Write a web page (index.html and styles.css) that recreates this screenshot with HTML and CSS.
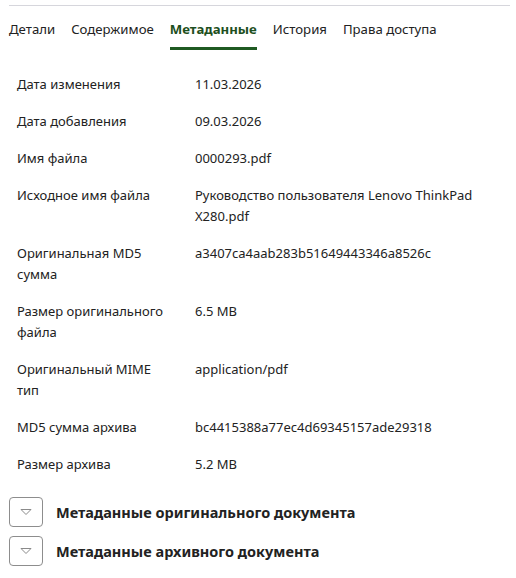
FILE: index.html
```html
<!DOCTYPE html>
<html lang="ru">
<head>
<meta charset="utf-8">
<link rel="stylesheet" href="styles.css">
</head>
<body>
<div class="panel">
  <nav class="tabs">
    <span class="tab">Детали</span>
    <span class="tab">Содержимое</span>
    <span class="tab active">Метаданные</span>
    <span class="tab">История</span>
    <span class="tab">Права доступа</span>
  </nav>
  <table class="meta">
    <tr><td class="k">Дата изменения</td><td class="v">11.03.2026</td></tr>
    <tr><td class="k">Дата добавления</td><td class="v">09.03.2026</td></tr>
    <tr><td class="k">Имя файла</td><td class="v">0000293.pdf</td></tr>
    <tr><td class="k">Исходное имя файла</td><td class="v">Руководство пользователя Lenovo ThinkPad X280.pdf</td></tr>
    <tr><td class="k">Оригинальная MD5 сумма</td><td class="v">a3407ca4aab283b51649443346a8526c</td></tr>
    <tr><td class="k">Размер оригинального файла</td><td class="v">6.5 MB</td></tr>
    <tr><td class="k">Оригинальный MIME тип</td><td class="v">application/pdf</td></tr>
    <tr><td class="k">MD5 сумма архива</td><td class="v">bc4415388a77ec4d69345157ade29318</td></tr>
    <tr><td class="k">Размер архива</td><td class="v">5.2 MB</td></tr>
  </table>
  <div class="sections">
    <div class="section">
      <button class="toggle"><svg width="12" height="8" viewBox="0 0 12 8"><path d="M1 1.5 H11 L6 6.5 Z" fill="none" stroke="#8a8a8a" stroke-width="1" stroke-linejoin="round"/></svg></button>
      <h3>Метаданные оригинального документа</h3>
    </div>
    <div class="section">
      <button class="toggle"><svg width="12" height="8" viewBox="0 0 12 8"><path d="M1 1.5 H11 L6 6.5 Z" fill="none" stroke="#8a8a8a" stroke-width="1" stroke-linejoin="round"/></svg></button>
      <h3>Метаданные архивного документа</h3>
    </div>
  </div>
</div>
</body>
</html>
```
FILE: styles.css
```css
html, body {
  margin: 0;
  padding: 0;
  background: #fff;
}
body {
  font-family: "Noto Sans", "Open Sans", sans-serif;
  font-size: 13px;
  color: #222;
}
.panel {
  margin: 5px 6px 0 9px;
  border-top: 1px solid #d6d6dc;
}
.tabs {
  display: flex;
  gap: 16px;
  align-items: flex-start;
  padding-top: 13px;
  line-height: 20px;
  font-size: 13.2px;
}
.tab {
  color: #222;
  border-bottom: 3px solid transparent;
  padding-bottom: 8px;
}
.tab.active {
  font-weight: 700;
  color: #1d4f20;
  border-bottom-color: #1f5a22;
}
.meta {
  border-collapse: collapse;
  margin-top: 16px;
}
.meta td {
  padding: 8px 0 8px 8px;
  line-height: 21px;
  vertical-align: top;
}
.meta .k {
  width: 178px;
  padding-right: 18px;
  box-sizing: border-box;
}
.meta .v {
  width: 300px;
  padding-left: 8px;
}
.sections {
  margin-top: 14px;
  display: flex;
  flex-direction: column;
  gap: 9px;
}
.section {
  display: flex;
  align-items: center;
  gap: 13px;
}
.toggle {
  width: 34px;
  height: 30px;
  border: 1px solid #8d8d8d;
  border-radius: 4px;
  background: #fff;
  padding: 0;
  display: flex;
  align-items: center;
  justify-content: center;
}
.section h3 {
  margin: 0;
  font-size: 14.5px;
  font-weight: 700;
  color: #222;
}
```
